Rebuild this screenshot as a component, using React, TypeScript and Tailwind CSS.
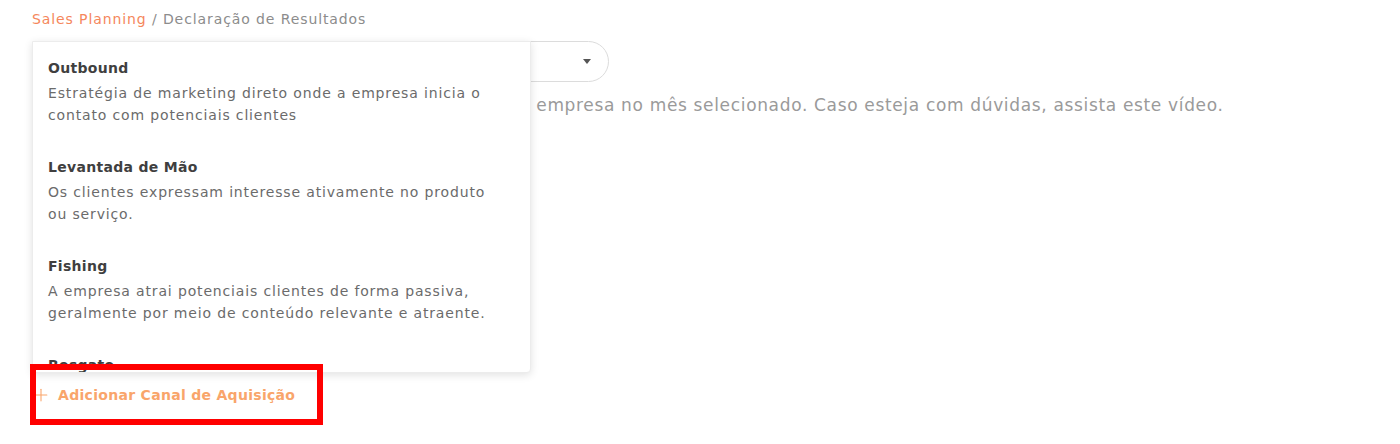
import { Plus } from 'lucide-react';

const channels = [
  {
    title: 'Outbound',
    desc: 'Estratégia de marketing direto onde a empresa inicia o contato com potenciais clientes',
  },
  {
    title: 'Levantada de Mão',
    desc: 'Os clientes expressam interesse ativamente no produto ou serviço.',
  },
  {
    title: 'Fishing',
    desc: 'A empresa atrai potenciais clientes de forma passiva, geralmente por meio de conteúdo relevante e atraente.',
  },
  {
    title: 'Resgate',
    desc: 'Reativação de clientes antigos ou leads que não avançaram no funil.',
  },
];

export default function App() {
  return (
    <div className="relative w-[1400px] h-[444px] bg-white overflow-hidden font-['DejaVu_Sans',sans-serif]">
      <div className="flex flex-col px-8 pt-[9px]">
        {/* Breadcrumb */}
        <div className="text-[14px] leading-5 tracking-[0.9px] text-[#8c8c8c]">
          <span className="text-[#f5875c]">Sales Planning</span> / Declaração de Resultados
        </div>

        {/* Select */}
        <div className="mt-3 flex h-[41px] w-[577px] items-center justify-end rounded-full border border-[#dcdcdc] pr-[17px]">
          <span className="h-0 w-0 border-x-4 border-t-[5px] border-x-transparent border-t-[#555]" />
        </div>

        <p className="mt-[11px] ml-[21px] text-[17px] leading-6 tracking-[0.66px] text-[#9a9a9a] whitespace-nowrap">
          Selecione os canais de aquisição utilizados pela sua empresa no mês selecionado. Caso esteja com dúvidas, assista este vídeo.
        </p>

        <button className="mt-[268px] -ml-px flex items-center gap-[7px] self-start text-[14px] font-semibold leading-5 tracking-[0.3px] text-[#f9a56b]">
          <Plus className="h-5 w-5" strokeWidth={1.3} />
          Adicionar Canal de Aquisição
        </button>
      </div>

      {/* Dropdown menu */}
      <div className="absolute left-8 top-[41px] h-[332px] w-[499px] overflow-hidden rounded-b-[4px] border border-[#ececec] bg-white shadow-[0_2px_8px_rgba(0,0,0,0.12)]">
        <ul className="pt-[1px]">
          {channels.map((c) => (
            <li key={c.title} className="pl-[15px] pr-[30px] pt-[15px] pb-4">
              <div className="text-[14px] font-semibold leading-5 tracking-[0.3px] text-[#3f3f3f]">{c.title}</div>
              <div className="mt-1 text-[14px] leading-[22px] tracking-[0.85px] text-[#6b6b6b]">{c.desc}</div>
            </li>
          ))}
        </ul>
      </div>

      {/* Highlight frame */}
      <div className="absolute left-[30px] top-[364px] h-[61px] w-[293px] border-[6px] border-[#ff0000]" />
    </div>
  );
}
